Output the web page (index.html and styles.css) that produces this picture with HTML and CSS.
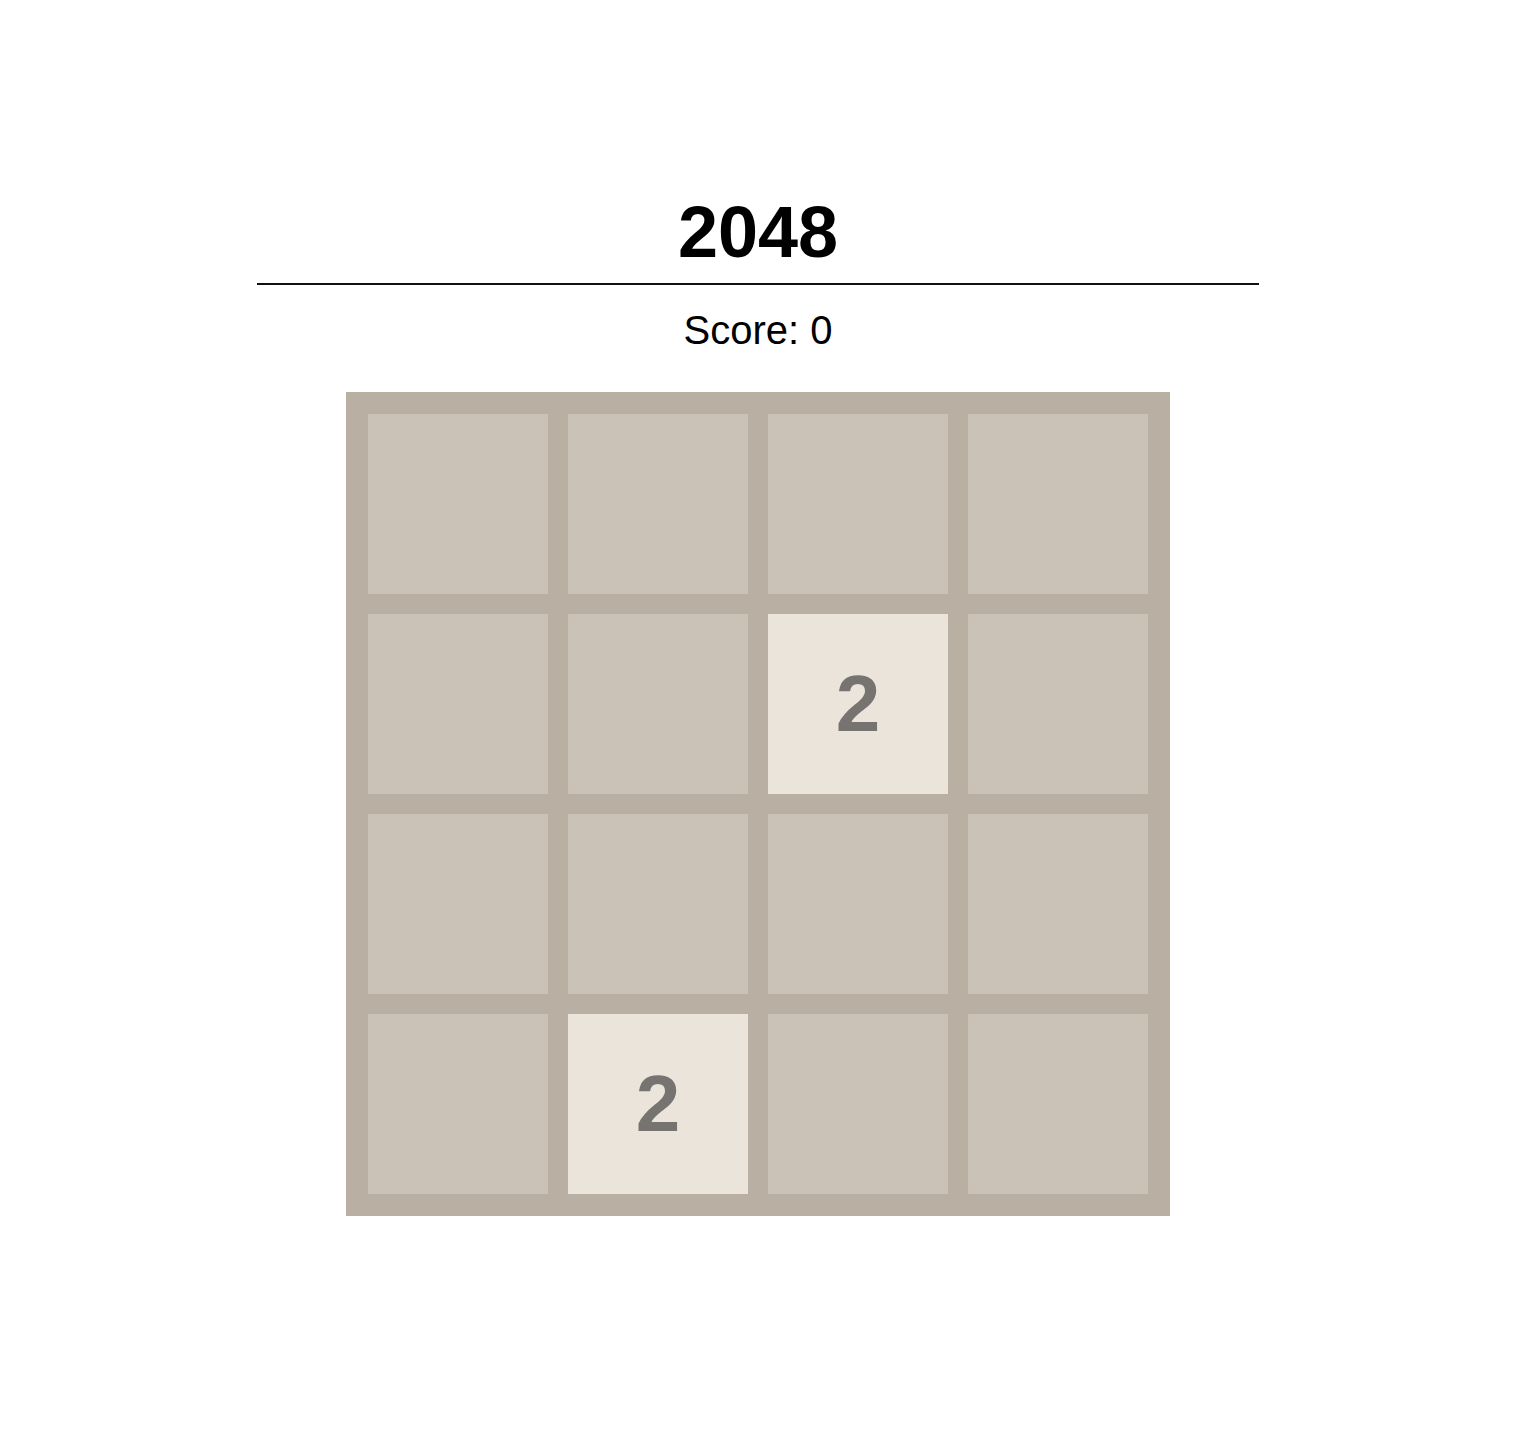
FILE: index.html
```html
<!DOCTYPE html>
<html lang="en">
<head>
<meta charset="utf-8">
<title>2048</title>
<link rel="stylesheet" href="styles.css">
</head>
<body>
<main class="game">
  <h1 class="game-title">2048</h1>
  <div class="divider"></div>
  <p class="score">Score: 0</p>
  <div class="board">
    <div class="cell"></div>
    <div class="cell"></div>
    <div class="cell"></div>
    <div class="cell"></div>

    <div class="cell"></div>
    <div class="cell"></div>
    <div class="cell tile-2">2</div>
    <div class="cell"></div>

    <div class="cell"></div>
    <div class="cell"></div>
    <div class="cell"></div>
    <div class="cell"></div>

    <div class="cell"></div>
    <div class="cell tile-2">2</div>
    <div class="cell"></div>
    <div class="cell"></div>
  </div>
</main>
</body>
</html>
```
FILE: styles.css
```css
html, body {
  margin: 0;
  padding: 0;
  background: #ffffff;
}

body {
  font-family: "Liberation Sans", Arial, Helvetica, sans-serif;
  color: #000;
}

.game {
  width: 1002px;
  margin-left: 257px;
  padding-top: 192px;
  display: flex;
  flex-direction: column;
  align-items: center;
}

.game-title {
  margin: 0;
  font-size: 72px;
  line-height: 80px;
  font-weight: 700;
}

.divider {
  align-self: stretch;
  margin-top: 11px;
  border-top: 2px solid #111;
}

.score {
  margin: 21px 0 0;
  font-size: 40px;
  line-height: 48px;
}

.board {
  margin-top: 38px;
  padding: 22px;
  background: #b9afa3;
  display: grid;
  grid-template-columns: repeat(4, 180px);
  grid-auto-rows: 180px;
  gap: 20px;
}

.cell {
  background: #cac2b7;
  display: flex;
  align-items: center;
  justify-content: center;
  font-size: 80px;
  font-weight: 700;
  color: #767370;
}

.tile-2 {
  background: #ebe4db;
}
```
